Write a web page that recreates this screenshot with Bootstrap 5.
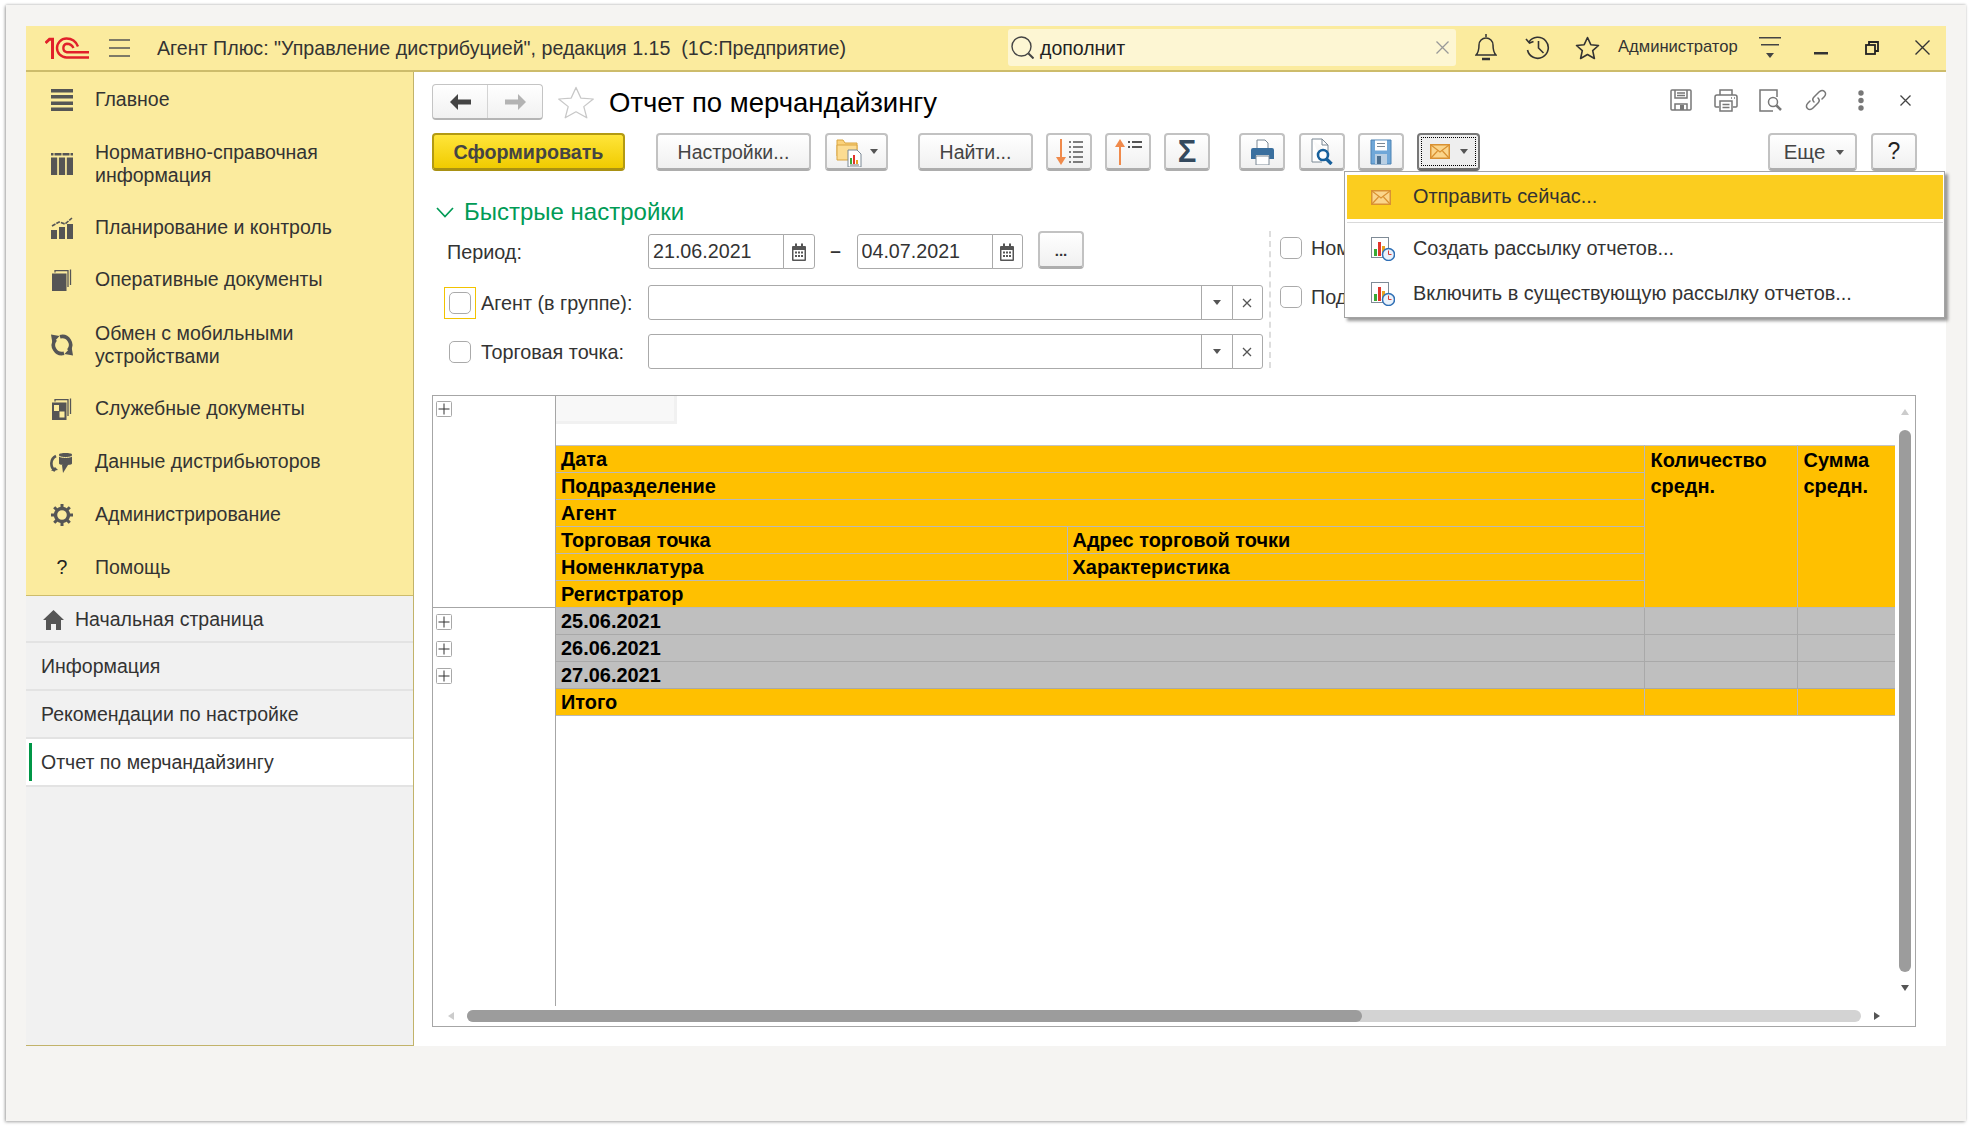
<!DOCTYPE html>
<html lang="ru">
<head>
<meta charset="utf-8">
<title>Отчет по мерчандайзингу</title>
<link href="https://cdn.jsdelivr.net/npm/bootstrap@5.3.0/dist/css/bootstrap.min.css" rel="stylesheet">
<style>
html,body{height:100%;}
body{background:#fff;margin:0;overflow:hidden;font-family:"Liberation Sans",Arial,sans-serif;font-size:19.5px;color:#333;}
svg{display:block;flex:none;}
.sheet{width:1960px;height:1116px;margin:5px 0 0 6px;padding:21px 20px;background:#f5f4f2;box-shadow:-1px 1px 3px rgba(0,0,0,.35),0 -1px 2px rgba(0,0,0,.12);}
.appwin{width:1920px;height:1020px;background:#fff;}
.topbar{height:46px;background:#fbeb9e;border-bottom:2px solid #cdbc6b;}
.logo-wrap{margin-left:19px;}
.burger{margin-left:20px;}
.app-title{margin-left:27px;width:851px;font-size:19.65px;white-space:pre;color:#333;padding-top:2px;}
.searchbox{width:448px;height:37px;background:#fdf6d3;border-radius:3px;margin-top:-1px;padding:0 7px 0 3px;}
.searchbox .stext{margin-left:6px;font-size:19.5px;color:#222;padding-top:3px;}
.t-ic{color:#333;}
.user-name{font-size:16.6px;color:#333;margin:-2px 0 0 0;width:121px;white-space:nowrap;}
.body-row{height:974px;}
.side{width:388px;background:#f1f1f1;border-right:1px solid #c2b36a;border-bottom:1px solid #c2b36a;}
.side-main{background:#fbeb9e;border-bottom:1px solid #cdbc6b;}
.sm-item{padding-left:25px;color:#333;height:53px;font-size:19.5px;line-height:23px;}
.sm-item.two{height:76px;}
.sm-item.up{padding-bottom:2px;}
.sm-item.dn{padding-top:2px;}
.sm-ic{width:22px;margin-right:22px;display:flex;justify-content:center;color:#555;}
.qmark{color:#222;font-size:19.5px;}
.open-list{--bs-list-group-bg:transparent;--bs-list-group-border-width:0;--bs-list-group-border-radius:0;}
.open-item{height:48px;background:#f1f1f1;border:0;border-bottom:2px solid #e3e3e3;padding:2px 0 0 15px;display:flex;align-items:center;color:#333;font-size:19.5px;}
.open-item.first{height:47px;padding-left:17px;}
.open-item.cur{background:#fff;position:relative;}
.open-item.cur::before{content:"";position:absolute;left:3px;top:4px;bottom:4px;width:3px;background:#009646;}
.mainpane{flex:1;padding:12px 30px 0 18px;position:relative;min-width:0;}
.nav-pair{width:111px;height:36px;border:1px solid #c4c4c4;border-bottom:2px solid #b5b5b5;border-radius:4px;background:linear-gradient(#fff,#f1f1f1);}
.nav-pair>div{flex:1;height:100%;display:flex;align-items:center;justify-content:center;}
.nav-pair>div+div{border-left:1px solid #d4d4d4;}
.form-title{margin-left:15px;font-size:27.5px;color:#000;line-height:36px;padding-top:2px;}
.fav{margin-left:15px;}
.head-tools{margin-left:auto;margin-right:-12px;margin-top:-4px;}
.head-tools .h-ic{width:45px;display:flex;justify-content:center;color:#777;}
.toolbar{margin-top:13px;height:39px;}
.tb-btn{--bs-btn-padding-x:0;--bs-btn-padding-y:0;--bs-btn-font-size:19.5px;--bs-btn-color:#444;--bs-btn-hover-color:#444;height:38px;border:2px solid #c2c2c2;border-bottom:3px solid #adadad;border-radius:4px;background:linear-gradient(#fff,#f0f0f0);display:flex;align-items:center;justify-content:center;flex:none;line-height:1;padding-top:2px;}
.tb-prime{border:2px solid #b39a12;border-bottom:3px solid #a99113;background:linear-gradient(#ffe53a,#f0cb00);color:#444;font-weight:700;width:193px;font-size:19.7px;}
.sq{width:46px;padding-top:0;}
.w155{width:155px;}
.w63{width:63px;padding-top:0;}
.w115{width:115px;}
.w89{width:89px;}
.ml13{margin-left:13px;}
.ml14{margin-left:14px;}
.ml29{margin-left:29px;}
.ml30{margin-left:30px;}
.ml31{margin-left:31px;}
.ml128{margin-left:288px;}
.eshe{font-size:20.5px;gap:11px;padding-left:3px;}
.helpq{font-size:23px;color:#222;}
.sigma{font-size:31px;font-weight:700;color:#34495e;line-height:1;}
.mail-on{width:63px;border:2px solid #777;border-bottom:3px solid #6c6c6c;padding:2px;background:#eee;}
.mail-on .dots{width:100%;height:100%;border:1px dotted #000;display:flex;align-items:center;justify-content:center;gap:10px;}
.caret-d{width:0;height:0;border-left:4px solid transparent;border-right:4px solid transparent;border-top:5px solid #555;}
.quick-h{margin-top:25px;height:30px;color:#009b56;font-size:24px;}
.quick-h span{margin-left:10px;}
.settings{height:137px;margin-top:4px;}
.set-left{width:831px;}
.set-row{height:49px;}
.set-row.r1{height:54px;padding-top:3px;}
.lbl-col{width:216px;padding:2px 0 0 15px;color:#333;white-space:nowrap;font-size:19.8px;}
.ck-wrap{width:32px;height:32px;margin:-2px 5px 0 -3px;display:flex;align-items:center;justify-content:center;border:1px solid transparent;flex:none;}
.ck-wrap.act{border-color:#f2c300;}
.ck{width:22px;height:22px;margin:0;border:1px solid #aaa;border-radius:3px;background-color:#fff;flex:none;}
.ck:focus{box-shadow:none;}
.fg{height:35px;flex-wrap:nowrap;}
.fg .form-control{height:35px;padding:0 4px;font-size:19.7px;border-color:#aaa;border-radius:3px 0 0 3px;color:#333;font-family:inherit;}
.fg .input-group-text{height:35px;width:31.5px;padding:0;justify-content:center;background:#fff;border-color:#aaa;border-radius:0;}
.fg .input-group-text:last-child{border-radius:0 3px 3px 0;}
.date-fg{width:166.5px;}
.dash{width:42px;text-align:center;font-size:19px;color:#333;font-weight:700;}
.dots-btn{width:46px;height:38px;margin-left:15px;margin-top:-3px;color:#333;font-weight:700;font-size:15px;}
.long-fg{width:615px;}
.set-right{margin-left:6px;width:75px;border-left:2px dashed #ddd;padding-left:9px;padding-top:6px;height:137px;white-space:nowrap;}
.rr{height:49px;}
.rr span{margin-left:9px;color:#333;font-size:19.8px;line-height:22px;}
.report-box{position:relative;margin-top:27px;height:632px;border:1px solid #a6a6a6;}
.tree-col{width:123px;height:610px;border-right:1px solid #a6a6a6;flex:none;}
.tree-head{height:212px;border-bottom:1px solid #a6a6a6;padding:5px 0 0 3px;}
.tree-rows{padding:0 0 0 3px;}
.plus{width:16px;height:16px;margin-bottom:11px;}
.tree-rows .plus:first-child{margin-top:6px;}
.data-col{width:1339px;flex:none;}
.ghost{width:121px;height:28px;background:#f8f8f8;border:solid #f1f1f1;border-width:0 3px 3px 0;}
.gap-row{height:21px;}
.rep{table-layout:fixed;border-collapse:collapse;width:1339px;font-weight:700;color:#000;font-size:19.95px;line-height:25px;}
.rep td{height:27px;padding:1px 0 0 5px;border:1px solid #b9b9b9;vertical-align:top;overflow:hidden;white-space:nowrap;}
.rep tr>td:first-child{border-left:0;}
.rep tr>td:last-child{border-right:0;}
.rep .o{background:#ffc000;}
.rep .g{background:#bfbfbf;border-color:#a9a9a9;}
.rep .pad6{padding-left:6px;white-space:normal;line-height:26px;}
.rep thead tr:first-child td{border-top:1px solid #c4c4c4;}
.vthumb{position:absolute;left:1466px;top:34px;width:12px;height:542px;border-radius:6px;background:#9c9c9c;}
.htrack{position:absolute;left:34px;top:614px;width:1394px;height:12px;border-radius:6px;background:#d3d3d3;}
.hthumb{width:895px;height:12px;border-radius:6px;background:#9c9c9c;}
.arr{position:absolute;width:0;height:0;}
.arr-up{left:1468px;top:13px;border:4px solid transparent;border-top:0;border-bottom:6px solid #ccc;}
.arr-dn{left:1468px;top:589px;border:4px solid transparent;border-bottom:0;border-top:6px solid #555;}
.arr-lf{left:15px;top:616px;border:4px solid transparent;border-left:0;border-right:6px solid #ccc;}
.arr-rt{left:1441px;top:616px;border:4px solid transparent;border-right:0;border-left:6px solid #555;}
.popup{position:absolute;left:930px;top:99px;width:601px;height:147px;display:block;padding:3px 1px 0 2px;margin:0;border:1px solid #a3a3a3;border-radius:0;background:#fff;box-shadow:3px 3px 3px rgba(0,0,0,.4);}
.popup .dropdown-item{padding:0 0 0 24px;height:44px;display:flex;align-items:center;color:#333;font-size:19.9px;}
.popup .dropdown-item.on{background:#fbcd1f;}
.popup .dropdown-divider{margin:3px 0 0;border-color:#d9d9d9;height:0;opacity:1;}
.popup .pi{width:42px;display:flex;flex:none;}
.popup .sp1{height:47px;margin-top:2px;}
</style>
</head>
<body>
<svg width="0" height="0" style="position:absolute">
  <symbol id="i-chartclock" viewBox="0 0 24 24">
    <rect x="0.5" y="0.5" width="17" height="20" fill="#fff" stroke="#7f8b96"/>
    <rect x="3" y="12" width="3" height="7" fill="#3aa935"/>
    <rect x="7" y="5" width="3" height="14" fill="#e2342b"/>
    <rect x="11" y="9" width="3" height="10" fill="#e9a321"/>
    <circle cx="17.5" cy="17.5" r="6" fill="#eaf2fb" stroke="#2f6fb5" stroke-width="1.5"/>
    <path d="M17.5 13.5v4h3" fill="none" stroke="#d63a34" stroke-width="1"/>
  </symbol>
  <symbol id="i-env" viewBox="0 0 20 15">
    <rect x="0.75" y="0.75" width="18.5" height="13.5" fill="#fbd58b" stroke="#d99132" stroke-width="1.5"/>
    <path d="M1 1l9 7 9-7M1 14l6.5-7M19 14l-6.5-7" fill="none" stroke="#d99132" stroke-width="1.2"/>
  </symbol>
  <symbol id="i-plus" viewBox="0 0 16 16">
    <rect x="0.5" y="0.5" width="15" height="15" fill="#fff" stroke="#a8a8a8" rx="1"/>
    <path d="M8 2.5v11M2.5 8h11" stroke="#333" stroke-width="1"/>
  </symbol>
  <symbol id="i-cal" viewBox="0 0 14 18">
    <path d="M1 3h12a1 1 0 0 1 1 1v13a1 1 0 0 1-1 1H1a1 1 0 0 1-1-1V4a1 1 0 0 1 1-1z" fill="#555"/>
    <rect x="3" y="0.5" width="2" height="4" fill="#555"/><rect x="9" y="0.5" width="2" height="4" fill="#555"/>
    <rect x="1.5" y="7" width="11" height="9.5" fill="#fff"/>
    <path d="M3 8.5h2v2H3zM6 8.5h2v2H6zM9 8.5h2v2H9zM3 12h2v2H3zM6 12h2v2H6zM9 12h2v2H9z" fill="#555"/>
  </symbol>
  <symbol id="i-x" viewBox="0 0 10 10"><path d="M1 1l8 8M9 1l-8 8" stroke="#555" stroke-width="1.3" fill="none"/></symbol>
  <symbol id="i-drop" viewBox="0 0 8 5"><path d="M0 0h8L4 5z" fill="#555"/></symbol>
</svg>

<div class="sheet">
<div class="appwin d-flex flex-column">

  <!-- header -->
  <header class="topbar d-flex align-items-center flex-none">
    <svg class="logo-wrap" width="44" height="22" viewBox="0 0 44 22" fill="none" stroke="#e1202a">
      <path d="M0.5 6L4.5 2.2H7.5V22" stroke-width="3"/>
      <path d="M44 20.5H21.5A9.5 9.5 0 0 1 21.5 1.5C27 1.5 31 4.5 33 9.5" stroke-width="2.4"/>
      <path d="M44 15.2H22A4.3 4.3 0 0 1 22 6.7C25 6.7 27 8 28.5 11" stroke-width="2.4"/>
    </svg>
    <svg class="burger" width="21" height="18" viewBox="0 0 21 18" stroke="#555" stroke-width="1.6"><path d="M0 1h21M0 9h21M0 17h21"/></svg>
    <div class="app-title">Агент Плюс: "Управление дистрибуцией", редакция 1.15  (1С:Предприятие)</div>
    <div class="searchbox d-flex align-items-center">
      <svg width="23" height="23" viewBox="0 0 23 23" fill="none" stroke="#444" stroke-width="1.4"><circle cx="10.5" cy="10.5" r="9.5"/><path d="M17.5 17.5l5 5" stroke-width="2"/></svg>
      <span class="stext">дополнит</span>
      <svg class="ms-auto" width="13" height="13" viewBox="0 0 13 13" stroke="#999" stroke-width="1.3"><path d="M0.5 0.5l12 12M12.5 0.5l-12 12"/></svg>
    </div>
    <svg class="t-ic" style="margin-left:19px" width="22" height="28" viewBox="0 0 22 28" fill="none" stroke="#333" stroke-width="1.5"><path d="M11 0v3"/><path d="M1 21c3-3 3-6 3-10a7 7 0 0 1 14 0c0 4 0 7 3 10z"/><path d="M7 25h8" stroke-width="2.5"/></svg>
    <svg class="t-ic" style="margin-left:28px" width="25" height="24" viewBox="0 0 25 24" fill="none" stroke="#333" stroke-width="1.6"><path d="M4 6a10.5 10.5 0 1 1-1.5 8"/><path d="M1 3l3.5 4L8.500 5.500" stroke-width="1.6"/><path d="M13.500 5v7l5 5"/></svg>
    <svg class="t-ic" style="margin-left:25px" width="25" height="24" viewBox="0 0 25 24" fill="none" stroke="#333" stroke-width="1.6" stroke-linejoin="round"><path d="M12.500 1.500l3.300 7.200 7.700.8-5.800 5.200 1.700 7.800-6.900-4-6.900 4 1.700-7.800L1.500 9.500l7.700-.8z"/></svg>
    <div class="user-name" style="margin-left:18px">Администратор</div>
    <svg class="t-ic" style="margin-left:20px" width="22" height="24" viewBox="0 0 22 24" fill="#444"><path d="M0 1h22v1.500H0zM2 8h18v1.500H2z"/><path d="M7 17h8l-4 5z"/></svg>
    <svg style="margin-left:33px;margin-top:10px" width="14" height="3" viewBox="0 0 14 3"><rect width="14" height="2.500" fill="#333"/></svg>
    <svg style="margin-left:37px" width="14" height="14" viewBox="0 0 14 14" fill="none" stroke="#222" stroke-width="1.8"><rect x="1" y="4" width="9" height="9"/><path d="M4 4V1h9v9h-3"/></svg>
    <svg style="margin-left:36px;margin-top:-1px" width="15" height="15" viewBox="0 0 15 15" stroke="#333" stroke-width="1.4"><path d="M0.500 0.500l14 14M14.500 0.500l-14 14"/></svg>
  </header>

  <div class="body-row d-flex">
    <!-- sidebar -->
    <aside class="side flex-none">
      <nav class="side-main">
        <div class="sm-item dn d-flex align-items-center"><span class="sm-ic"><svg width="22" height="22" viewBox="0 0 22 22" fill="#555"><path d="M0 0h22v3.500H0zM0 6h22v3.500H0zM0 12.500h22V16H0zM0 18.500h22V22H0z"/></svg></span>Главное</div>
        <div class="sm-item two dn d-flex align-items-center"><span class="sm-ic"><svg width="22" height="22" viewBox="0 0 22 22" fill="#555"><path d="M0 0h22v2.500H0zM0 4.500h6.200V22H0zM7.900 4.500h6.200V22H7.900zM15.800 4.500H22V22h-6.200z"/><path d="M3 0v3M11 0v3M19 0v3" stroke="#fbeb9e" stroke-width="1"/></svg></span><span>Нормативно-справочная<br>информация</span></div>
        <div class="sm-item d-flex align-items-center"><span class="sm-ic"><svg width="22" height="22" viewBox="0 0 22 22" fill="#555"><rect x="0" y="13" width="6" height="9"/><rect x="8" y="10" width="6" height="12"/><rect x="16" y="7" width="6" height="15"/><path d="M1 9l7-4 6 2 7-6" fill="none" stroke="#555" stroke-width="1.6" stroke-dasharray="4 1"/></svg></span>Планирование и контроль</div>
        <div class="sm-item up d-flex align-items-center"><span class="sm-ic"><svg width="20" height="22" viewBox="0 0 20 22"><rect x="0" y="4.500" width="14.500" height="17.500" fill="#555"/><path d="M3 3.500V1.700h13V18M18.500 0.500V16" fill="none" stroke="#555" stroke-width="1.300"/></svg></span>Оперативные документы</div>
        <div class="sm-item two d-flex align-items-center"><span class="sm-ic"><svg width="22" height="22" viewBox="0 0 22 22" fill="none" stroke="#555" stroke-width="3.600"><path d="M13 19.300A8.500 8.500 0 0 1 4.500 5.500"/><path d="M9 2.700A8.500 8.500 0 0 1 17.500 16.500"/><path d="M0 0.500l8.500 1.500L1.500 9.500zM22 21.500l-8.500-1.500 7-7.500z" fill="#555" stroke="none"/></svg></span><span>Обмен с мобильными<br>устройствами</span></div>
        <div class="sm-item up d-flex align-items-center"><span class="sm-ic"><svg width="20" height="22" viewBox="0 0 20 22"><rect x="0" y="4.500" width="14.500" height="17.500" fill="#555"/><rect x="2" y="7" width="5" height="6" fill="#fbeb9e"/><rect x="7.500" y="13.500" width="5" height="6" fill="#fbeb9e"/><path d="M3 3.500V1.700h13V18M18.500 0.500V16" fill="none" stroke="#555" stroke-width="1.300"/></svg></span>Служебные документы</div>
        <div class="sm-item up d-flex align-items-center"><span class="sm-ic"><svg width="24" height="22" viewBox="0 0 24 22" fill="#555"><path d="M9 3.500c0-2 13-2 13 0v9c0 2-13 2-13 0z"/><path d="M9 5c2 2 11 2 13 0" fill="none" stroke="#fbeb9e" stroke-width="1"/><path d="M6 5C0 8 0 16 5 20" fill="none" stroke="#555" stroke-width="2.600"/><path d="M1 20l7-1-3-3zM12 14h6l-5 8z"/></svg></span>Данные дистрибьюторов</div>
        <div class="sm-item up d-flex align-items-center"><span class="sm-ic"><svg width="22" height="22" viewBox="0 0 22 22"><circle cx="11" cy="11" r="6.500" fill="none" stroke="#555" stroke-width="3.400"/><path d="M11 0v22M0 11h22M3.200 3.200l15.600 15.600M18.800 3.200L3.200 18.800" stroke="#555" stroke-width="3" stroke-dasharray="4 14"/></svg></span>Администрирование</div>
        <div class="sm-item up d-flex align-items-center"><span class="sm-ic qmark">?</span>Помощь</div>
      </nav>
      <div class="list-group open-list">
        <a class="list-group-item open-item first"><svg class="me-2" width="21" height="20" viewBox="0 0 21 20" fill="#555"><path d="M10.500 0L21 10h-3v10h-5v-6H8v6H3V10H0z"/></svg><span style="margin-left:3px">Начальная страница</span></a>
        <a class="list-group-item open-item">Информация</a>
        <a class="list-group-item open-item">Рекомендации по настройке</a>
        <a class="list-group-item open-item cur">Отчет по мерчандайзингу</a>
      </div>
    </aside>

    <!-- main -->
    <main class="mainpane">
      <div class="d-flex align-items-center" style="height:36px">
        <div class="nav-pair d-flex">
          <div><svg width="21" height="16" viewBox="0 0 21 16" fill="#444"><path d="M8 0v5.500h13v5H8V16L0 8z"/></svg></div>
          <div><svg width="21" height="16" viewBox="0 0 21 16" fill="#b3b3b3"><path d="M13 0v5.500H0v5h13V16l8-8z"/></svg></div>
        </div>
        <svg class="fav" width="36" height="33" viewBox="0 0 36 33" fill="#fff" stroke="#c8c8c8" stroke-width="1.300" stroke-linejoin="round"><path d="M18 1.500l4.800 11.500 12.500 1-9.500 8.200 3 12-10.800-6.500-10.800 6.500 3-12-9.500-8.200 12.500-1z" transform="scale(1 .93)"/></svg>
        <div class="form-title">Отчет по мерчандайзингу</div>
        <div class="head-tools d-flex align-items-center">
          <span class="h-ic"><svg width="22" height="22" viewBox="0 0 22 22" fill="none" stroke="#777" stroke-width="1.500"><path d="M2 1h18a1 1 0 0 1 1 1v18a1 1 0 0 1-1 1H2a1 1 0 0 1-1-1V2a1 1 0 0 1 1-1z"/><path d="M5 1v8h12V1M7 4h8M7 6.500h8M5 21v-6h12v6"/><rect x="10" y="16" width="4" height="5" fill="#777" stroke="none"/></svg></span>
          <span class="h-ic"><svg width="24" height="23" viewBox="0 0 24 23" fill="none" stroke="#777" stroke-width="1.500"><path d="M6 6V1h12v5M5 18H2a1 1 0 0 1-1-1V8a2 2 0 0 1 2-2h18a2 2 0 0 1 2 2v9a1 1 0 0 1-1 1h-3"/><rect x="6" y="12" width="12" height="10"/><path d="M8.500 15.500h7M8.500 18.500h7M17 9h1M20 9h1"/></svg></span>
          <span class="h-ic"><svg width="23" height="23" viewBox="0 0 23 23" fill="none" stroke="#777" stroke-width="1.500"><path d="M18 8V1H1v21h13"/><circle cx="14" cy="13" r="4.500"/><path d="M17.500 16.500L22 21" stroke-width="2.500"/></svg></span>
          <span class="h-ic"><svg width="24" height="24" viewBox="0 0 24 24" fill="none" stroke="#777" stroke-width="1.500" stroke-linecap="round"><path d="M10 14c-1.500-1.500-1.500-3.500 0-5l5-5c2-2 4-2 5.500-.5S22 7 20 9l-2 2"/><path d="M14 10c1.500 1.500 1.500 3.500 0 5l-5 5c-2 2-4 2-5.500.5S2 17 4 15l2-2"/></svg></span>
          <span class="h-ic"><svg width="6" height="21" viewBox="0 0 6 21" fill="#777"><circle cx="3" cy="3" r="2.700"/><circle cx="3" cy="10.500" r="2.700"/><circle cx="3" cy="18" r="2.700"/></svg></span>
          <span class="h-ic"><svg width="11" height="11" viewBox="0 0 11 11" stroke="#444" stroke-width="1.300"><path d="M0.500 0.500l10 10M10.500 0.500l-10 10"/></svg></span>
        </div>
      </div>

      <div class="toolbar d-flex">
        <button class="btn tb-btn tb-prime">Сформировать</button>
        <button class="btn tb-btn w155 ml31">Настройки...</button>
        <button class="btn tb-btn w63 ml14 gap-2">
          <svg width="26" height="30" viewBox="0 0 26 30"><path d="M1 3h6l2 3h12v13H1z" fill="#fbd27a" stroke="#d9a441"/><path d="M1 8h20v15H1z" fill="#fcdc92" stroke="#d9a441"/><path d="M12 13h9l4 4v13H12z" fill="#fff" stroke="#7b8894"/><path d="M15 21v6" stroke="#3aa935" stroke-width="2"/><path d="M18 18v9" stroke="#e2342b" stroke-width="2"/><path d="M21 23v4" stroke="#e9a321" stroke-width="2"/><path d="M14 28h9" stroke="#777"/></svg>
          <span class="caret-d"></span>
        </button>
        <button class="btn tb-btn w115 ml30">Найти...</button>
        <button class="btn tb-btn sq ml13"><svg width="28" height="26" viewBox="0 0 28 26"><path d="M6 0v24" stroke="#f08a4b" stroke-width="2"/><path d="M1 18l5 8 5-8z" fill="#f08a4b"/><path d="M14 3h2M18 3h10M14 8h2M18 8h10M14 13h2M18 13h10M14 18h2M18 18h10M14 23h2M18 23h10" stroke="#555" stroke-width="1.700"/></svg></button>
        <button class="btn tb-btn sq ml13"><svg width="28" height="26" viewBox="0 0 28 26"><path d="M6 2v24" stroke="#f08a4b" stroke-width="2"/><path d="M1 8l5-8 5 8z" fill="#f08a4b"/><path d="M14 3h2M18 3h10M14 8h2M18 8h10" stroke="#555" stroke-width="2"/></svg></button>
        <button class="btn tb-btn sq ml13"><span class="sigma">Σ</span></button>
        <button class="btn tb-btn sq ml29"><svg width="23" height="26" viewBox="0 0 23 26"><path d="M6 9V1h8l3 3v5" fill="#fff" stroke="#7b8894"/><path d="M2 9h19a2 2 0 0 1 2 2v9h-5v-4H5v4H0v-9a2 2 0 0 1 2-2z" fill="#3a6f9e"/><rect x="5" y="17" width="13" height="9" fill="#fff" stroke="#7b8894"/></svg></button>
        <button class="btn tb-btn sq ml14"><svg width="22" height="27" viewBox="0 0 22 27"><path d="M1 1h10l6 6v7M11 24H1V1M11 1v6h6" fill="#fff" stroke="#7b8894"/><circle cx="12" cy="17" r="5" fill="#fff" stroke="#17609c" stroke-width="2.600"/><path d="M15.500 21l5 5" stroke="#17609c" stroke-width="3.400"/></svg></button>
        <button class="btn tb-btn sq ml13"><svg width="22" height="26" viewBox="0 0 22 26"><path d="M1 1h20v24H1z" fill="#6fa7d8" stroke="#4c82b3"/><rect x="5" y="1.500" width="12" height="10" fill="#fff"/><path d="M7 4.500h8M7 7.500h8" stroke="#7b8894"/><rect x="5" y="15" width="12" height="10" fill="#b9cfe3"/><rect x="7" y="17" width="4" height="8" fill="#4c6f8f"/></svg></button>
        <button class="btn tb-btn mail-on ml13"><span class="dots"><svg width="20" height="15"><use href="#i-env"/></svg><span class="caret-d"></span></span></button>
        <button class="btn tb-btn w89 ml128 eshe">Еще <span class="caret-d"></span></button>
        <button class="btn tb-btn sq ml14 helpq">?</button>
      </div>

      <div class="quick-h d-flex align-items-center">
        <svg width="18" height="11" viewBox="0 0 18 11" fill="none" stroke="#009b56" stroke-width="1.700" style="margin-left:4px"><path d="M1 1l8 8.500L17 1"/></svg>
        <span>Быстрые настройки</span>
      </div>

      <div class="settings d-flex">
        <div class="set-left">
          <div class="set-row r1 d-flex align-items-start">
            <div class="lbl-col d-flex align-items-center" style="height:35px">Период:</div>
            <div class="input-group fg date-fg"><input class="form-control" type="text" value="21.06.2021" readonly><span class="input-group-text"><svg width="14" height="18"><use href="#i-cal"/></svg></span></div>
            <div class="dash d-flex align-items-center justify-content-center" style="height:35px">–</div>
            <div class="input-group fg date-fg"><input class="form-control" type="text" value="04.07.2021" readonly><span class="input-group-text"><svg width="14" height="18"><use href="#i-cal"/></svg></span></div>
            <button class="btn tb-btn dots-btn">...</button>
          </div>
          <div class="set-row d-flex align-items-start">
            <div class="lbl-col d-flex align-items-center" style="height:35px"><span class="ck-wrap act"><input class="form-check-input ck" type="checkbox"></span>Агент (в группе):</div>
            <div class="input-group fg long-fg"><input class="form-control" type="text" readonly><span class="input-group-text"><svg width="8" height="5"><use href="#i-drop"/></svg></span><span class="input-group-text"><svg width="10" height="10"><use href="#i-x"/></svg></span></div>
          </div>
          <div class="set-row d-flex align-items-start">
            <div class="lbl-col d-flex align-items-center" style="height:35px"><span class="ck-wrap"><input class="form-check-input ck" type="checkbox"></span>Торговая точка:</div>
            <div class="input-group fg long-fg"><input class="form-control" type="text" readonly><span class="input-group-text"><svg width="8" height="5"><use href="#i-drop"/></svg></span><span class="input-group-text"><svg width="10" height="10"><use href="#i-x"/></svg></span></div>
          </div>
        </div>
        <div class="set-right">
          <div class="rr d-flex align-items-start"><input class="form-check-input ck" type="checkbox"><span>Ном</span></div>
          <div class="rr d-flex align-items-start"><input class="form-check-input ck" type="checkbox"><span>Под</span></div>
        </div>
      </div>

      <section class="report-box d-flex">
        <div class="tree-col">
          <div class="tree-head"><svg class="plus" viewBox="0 0 16 16"><use href="#i-plus"/></svg></div>
          <div class="tree-rows">
            <svg class="plus" viewBox="0 0 16 16"><use href="#i-plus"/></svg>
            <svg class="plus" viewBox="0 0 16 16"><use href="#i-plus"/></svg>
            <svg class="plus" viewBox="0 0 16 16"><use href="#i-plus"/></svg>
          </div>
        </div>
        <div class="data-col">
          <div class="ghost"></div>
          <div class="gap-row"></div>
          <table class="rep">
            <colgroup><col style="width:511px"><col style="width:577px"><col style="width:153px"><col style="width:98px"></colgroup>
            <thead>
              <tr><td class="o" colspan="2">Дата</td><td class="o pad6" rowspan="6">Количество средн.</td><td class="o pad6" rowspan="6">Сумма средн.</td></tr>
              <tr><td class="o" colspan="2">Подразделение</td></tr>
              <tr><td class="o" colspan="2">Агент</td></tr>
              <tr><td class="o">Торговая точка</td><td class="o">Адрес торговой точки</td></tr>
              <tr><td class="o">Номенклатура</td><td class="o">Характеристика</td></tr>
              <tr><td class="o" colspan="2">Регистратор</td></tr>
            </thead>
            <tbody>
              <tr><td class="g" colspan="2">25.06.2021</td><td class="g"></td><td class="g"></td></tr>
              <tr><td class="g" colspan="2">26.06.2021</td><td class="g"></td><td class="g"></td></tr>
              <tr><td class="g" colspan="2">27.06.2021</td><td class="g"></td><td class="g"></td></tr>
              <tr><td class="o" colspan="2">Итого</td><td class="o"></td><td class="o"></td></tr>
            </tbody>
          </table>
        </div>
        <span class="arr arr-up"></span>
        <div class="vthumb"></div>
        <span class="arr arr-dn"></span>
        <span class="arr arr-lf"></span>
        <div class="htrack"><div class="hthumb"></div></div>
        <span class="arr arr-rt"></span>
      </section>

      <div class="dropdown-menu popup show">
        <a class="dropdown-item on"><span class="pi"><svg width="20" height="15"><use href="#i-env"/></svg></span>Отправить сейчас...</a>
        <div class="dropdown-divider"></div>
        <div class="sp1"><a class="dropdown-item" style="height:47px"><span class="pi"><svg width="24" height="24"><use href="#i-chartclock"/></svg></span>Создать рассылку отчетов...</a></div>
        <a class="dropdown-item" style="height:44px"><span class="pi"><svg width="24" height="24"><use href="#i-chartclock"/></svg></span>Включить в существующую рассылку отчетов...</a>
      </div>
    </main>
  </div>
</div>
</div>
<script src="https://cdn.jsdelivr.net/npm/bootstrap@5.3.0/dist/js/bootstrap.bundle.min.js"></script>
</body>
</html>
